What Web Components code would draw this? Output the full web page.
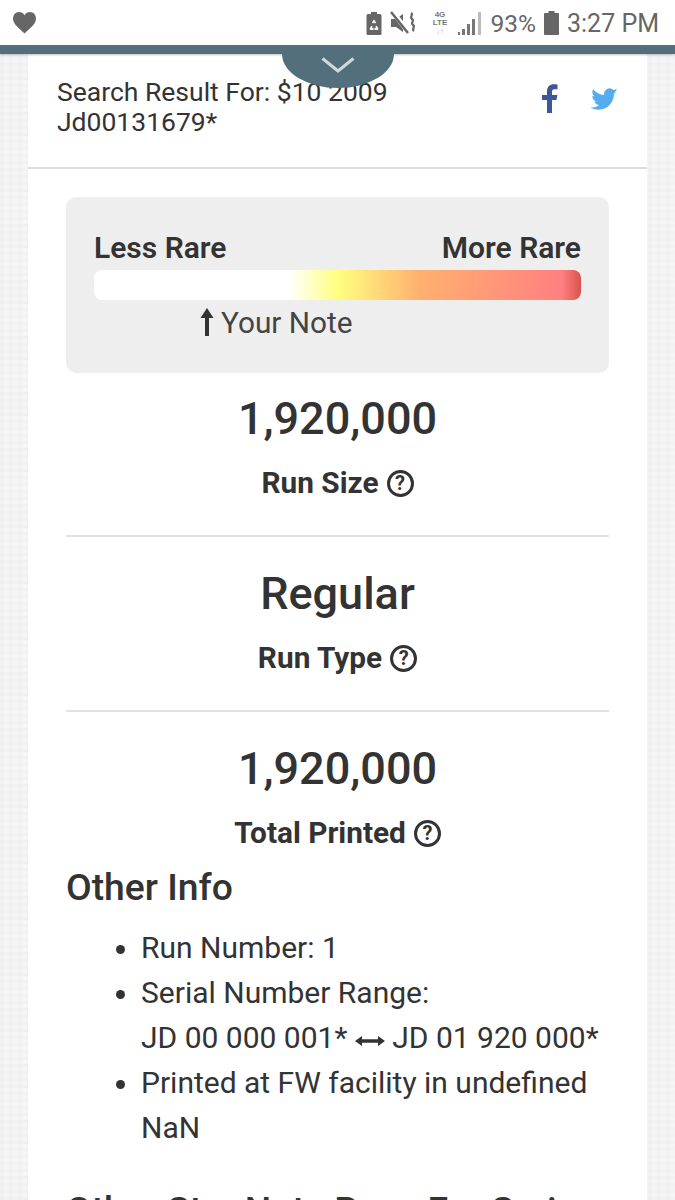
<!DOCTYPE html>
<html>
<head>
<meta charset="utf-8">
<style>
html,body{margin:0;height:1200px;overflow:hidden;}
body{
    font-family:Roboto,"Liberation Sans",sans-serif;
    color:#333;
    background-color:#f5f5f5;
    background-image:
        repeating-linear-gradient(0deg,rgba(0,0,0,.012) 0 3px,transparent 3px 7px),
        repeating-linear-gradient(90deg,rgba(0,0,0,.012) 0 4px,transparent 4px 9px);
}
main-card{margin:0 28px;}
</style>
</head>
<body>
<status-bar></status-bar>
<top-stripe></top-stripe>
<main-card>
    <result-header>Search Result For: $10 2009<br>Jd00131679*</result-header>
    <rarity-meter></rarity-meter>
    <stat-block value="1,920,000" label="Run Size" divider first></stat-block>
    <stat-block value="Regular" label="Run Type" divider></stat-block>
    <stat-block value="1,920,000" label="Total Printed"></stat-block>
    <info-list heading="Other Info">
        <li>Run Number: 1</li>
        <li>Serial Number Range:<br>JD 00 000 001* <svg width="30" height="12" viewBox="0 0 30 12" style="vertical-align:1px"><path d="M0 6l7-5v3.200h16V1l7 5-7 5V7.800H7V11z" fill="#333"/></svg> JD 01 920 000*</li>
        <li>Printed at FW facility in undefined NaN</li>
    </info-list>
    <more-heading>Other Star Note Runs For Series</more-heading>
</main-card>

<script>
class StatusBar extends HTMLElement{
    constructor(){
        super();
        this.attachShadow({mode:'open'}).innerHTML = `
<style>
:host{display:flex;align-items:center;height:45px;padding:1px 16px 0 13px;background:#fff;color:#666;font-size:25px;box-sizing:border-box;}
.right{margin-left:auto;display:flex;align-items:center;}
svg{display:block;}
.net{width:15px;margin:0 10px 0 16px;font:700 8px/8px "Liberation Sans",sans-serif;text-align:center;color:#777;}
.arrows{color:#bbb;font-size:8px;line-height:9px;}
.pct{margin:0 8px 0 9px;font-size:24.500px;}
.time{margin-left:8px;}
</style>
<svg width="23" height="22" viewBox="0 0 23 22"><path d="M11.500 21.500C7 17 0 12.500 0 6.500 0 2.800 2.700 0 6 0c2.300 0 4.300 1.200 5.500 3.200C12.700 1.200 14.700 0 17 0c3.300 0 6 2.800 6 6.500 0 6-7 10.500-11.500 15z" fill="#666"/></svg>
<div class="right">
    <svg width="16" height="23" viewBox="0 0 16 23"><path d="M5 0h6v2h3a1.500 1.500 0 0 1 1.500 1.500v18A1.500 1.500 0 0 1 14 23H2a1.500 1.500 0 0 1-1.500-1.500v-18A1.500 1.500 0 0 1 2 2h3z" fill="#666"/><path d="M8 7.500l2.300 3.200-1.500.8-.8-1.300-.8 1.300-1.500-.8zM3.500 17l1.600-3.200 1.700 1-.8 1.200h1.500V18H4.500zM12.500 17l-1.600-3.200-1.700 1 .8 1.200H8.500V18h3z" fill="#fff"/></svg>
    <svg style="margin-left:8px" width="27" height="24" viewBox="0 0 27 24"><path d="M1 8h5l7-5v18l-7-5H1z" fill="#666"/><path d="M2 0l17 22" stroke="#fff" stroke-width="5"/><path d="M1 1l17 21" stroke="#666" stroke-width="2.500"/><path d="M21 2c3 2-2 4 1 6s-2 4 1 6-2 4 1 6" fill="none" stroke="#666" stroke-width="2.200"/></svg>
    <div class="net">4G<br>LTE<div class="arrows">↓↑</div></div>
    <svg width="24" height="24" viewBox="0 0 24 24" fill="#777"><path d="M0 21h2v3H0zM4 18h3v6H4z"/><path d="M9 13h3v11H9zM14 8h3v16h-3z"/><path d="M20 1h3v23h-3z" fill="#bbb"/></svg>
    <span class="pct">93%</span>
    <svg width="15" height="24" viewBox="0 0 15 24"><path d="M4.500 0h6v2H14a1 1 0 0 1 1 1v20a1 1 0 0 1-1 1H1a1 1 0 0 1-1-1V3a1 1 0 0 1 1-1h3.500z" fill="#666"/></svg>
    <span class="time">3:27 PM</span>
</div>`;
    }
}

class TopStripe extends HTMLElement{
    constructor(){
        super();
        this.attachShadow({mode:'open'}).innerHTML = `
<style>
:host{display:block;position:relative;z-index:2;height:9px;background:#546f7c;box-shadow:0 1px 2px rgba(0,0,0,.25);}
.tab{position:absolute;left:282px;top:9px;width:112px;height:34px;background:#546f7c;border-radius:0 0 56px 56px / 0 0 34px 34px;}
svg{position:absolute;left:39px;top:3px;}
</style>
<div class="tab"><svg width="34" height="16" viewBox="0 0 34 16"><path d="M1.500 1.500L17 14 32.500 1.500" fill="none" stroke="#cfd8dc" stroke-width="3"/></svg></div>`;
    }
}

class MainCard extends HTMLElement{
    constructor(){
        super();
        this.attachShadow({mode:'open'}).innerHTML = `
<style>
:host{display:block;background:#fff;height:1146px;overflow:hidden;}
</style>
<slot></slot>`;
    }
}

class ResultHeader extends HTMLElement{
    constructor(){
        super();
        this.attachShadow({mode:'open'}).innerHTML = `
<style>
:host{display:flex;justify-content:space-between;padding:23px 29px 0;border-bottom:2px solid #ddd;box-sizing:border-box;height:115px;font-size:26.500px;line-height:30px;color:#333;}
.social{display:flex;gap:33px;padding-top:7px;height:30px;}
svg{display:block;}
svg.tw{margin-top:4px;}
</style>
<div class="title"><slot></slot></div>
<div class="social">
    <svg width="17" height="29" viewBox="0 0 17 29"><path d="M11 29V16h4.500l.9-5H11V7.800c0-1.500.5-2.500 2.500-2.500h3V.6C16 .5 14.500.3 12.800.3 9 .3 6 2.700 6 7.200V11H1v5h5v13z" fill="#3b5998"/></svg>
    <svg class="tw" width="27" height="22" viewBox="0 0 24 20"><path d="M23.950 2.570a10 10 0 0 1-2.820.78 4.960 4.960 0 0 0 2.160-2.730c-.95.560-2 .96-3.120 1.190a4.920 4.920 0 0 0-8.390 4.480C7.690 6.100 4.070 4.130 1.640 1.160a4.820 4.820 0 0 0-.67 2.480c0 1.710.87 3.210 2.190 4.090a4.900 4.900 0 0 1-2.230-.61v.06a4.920 4.920 0 0 0 3.950 4.820 5 5 0 0 1-2.210.09 4.940 4.940 0 0 0 4.600 3.420A9.870 9.870 0 0 1 .17 17.610c-.39 0-.78-.02-1.170-.07a14 14 0 0 0 7.560 2.210c9.050 0 14-7.500 14-13.990 0-.21 0-.42-.02-.63a9.940 9.940 0 0 0 2.460-2.550z" fill="#55acee"/></svg>
</div>`;
    }
}

class RarityMeter extends HTMLElement{
    constructor(){
        super();
        this.attachShadow({mode:'open'}).innerHTML = `
<style>
:host{display:block;margin:28px 38px 0;padding:34px 28px 34px;height:176px;box-sizing:border-box;background:#eee;border-radius:10px;}
.labels{display:flex;justify-content:space-between;font-size:30px;font-weight:600;line-height:34px;color:#333;}
.bar{height:30px;margin-top:5px;border-radius:8px;background:linear-gradient(to right,#fff 0,#fff 40%,#ffff80 50%,#ffb070 67%,#ff8080 96%,#d9534f 100%);}
.note{display:flex;align-items:center;height:32px;margin:6px 0 0 106px;font-size:29.800px;color:#444;}
svg{margin-right:7px;}
</style>
<div class="labels"><span>Less Rare</span><span>More Rare</span></div>
<div class="bar"></div>
<div class="note"><svg width="14" height="28" viewBox="0 0 14 28"><path d="M7 0l6.500 10H9v18H5V10H.5z" fill="#333"/></svg><span>Your Note</span></div>`;
    }
}

class StatBlock extends HTMLElement{
    constructor(){
        super();
        this.attachShadow({mode:'open'}).innerHTML = `
<style>
:host{display:block;margin:0 38px;padding:32px 0 0;text-align:center;}
:host([first]){padding-top:21px;}
:host([divider]){padding-bottom:35px;border-bottom:2px solid #e2e2e2;}
.value{font-size:45px;font-weight:500;line-height:50px;color:#333;}
.label{display:flex;justify-content:center;align-items:center;gap:8px;margin-top:22px;font-size:29.800px;font-weight:700;line-height:34px;color:#333;}
.help{display:inline-flex;justify-content:center;align-items:center;width:21px;height:21px;border:3px solid #333;border-radius:50%;font-size:20px;font-weight:700;line-height:1;}
</style>
<div class="value"></div>
<div class="label"><span class="name"></span><span class="help">?</span></div>`;
    }
    connectedCallback(){
        this.shadowRoot.querySelector('.value').textContent = this.getAttribute('value');
        this.shadowRoot.querySelector('.name').textContent = this.getAttribute('label');
    }
}

class InfoList extends HTMLElement{
    constructor(){
        super();
        this.attachShadow({mode:'open'}).innerHTML = `
<style>
:host{display:block;margin:15px 38px 0;}
h2{margin:0;font-size:37.300px;font-weight:500;line-height:44px;color:#333;}
ul{margin:16px 0 0;padding:0 0 0 75px;font-size:30px;line-height:45px;color:#333;}
</style>
<h2></h2>
<ul><slot></slot></ul>`;
    }
    connectedCallback(){
        this.shadowRoot.querySelector('h2').textContent = this.getAttribute('heading');
    }
}

class MoreHeading extends HTMLElement{
    constructor(){
        super();
        this.attachShadow({mode:'open'}).innerHTML = `
<style>
:host{display:block;margin:38px 38px 0;font-size:37.300px;font-weight:500;line-height:44px;white-space:nowrap;color:#333;}
</style>
<slot></slot>`;
    }
}

customElements.define("status-bar",StatusBar);
customElements.define("top-stripe",TopStripe);
customElements.define("main-card",MainCard);
customElements.define("result-header",ResultHeader);
customElements.define("rarity-meter",RarityMeter);
customElements.define("stat-block",StatBlock);
customElements.define("info-list",InfoList);
customElements.define("more-heading",MoreHeading);
</script>
</body>
</html>
